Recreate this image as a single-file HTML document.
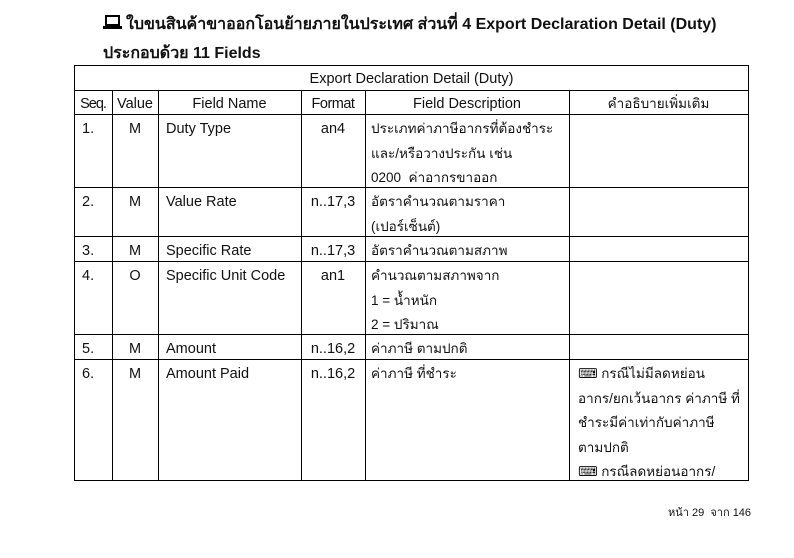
<!DOCTYPE html>
<html><head><meta charset="utf-8"><style>
body{margin:0;width:794px;height:558px;background:#fff;position:relative;overflow:hidden;font-family:"Liberation Sans","DejaVu Sans",sans-serif;color:#111}
.t{position:absolute;white-space:nowrap;font-size:13.5px;line-height:24.5px;margin-top:2px}
.e{font-size:14.5px}
.h{position:absolute;background:#000;height:1px}
.v{position:absolute;background:#000;width:1px}
.c{text-align:center}
</style></head><body>
<div class="t" style="left:103px;top:9px;font-size:16px;font-weight:bold;line-height:28px"><svg width="19" height="16" viewBox="0 0 19 16" style="vertical-align:-1px;margin-right:4px"><rect x="2" y="1" width="15" height="11" fill="#000"/><rect x="4" y="3" width="11" height="7" fill="#fff"/><rect x="0" y="12" width="19" height="3" fill="#000"/></svg>ใบขนสินค้าขาออกโอนย้ายภายในประเทศ ส่วนที่ 4 Export Declaration Detail (Duty)</div>
<div class="t" style="left:103px;top:38px;font-size:16px;font-weight:bold;line-height:28px">ประกอบด้วย 11 Fields</div>

<div class="h" style="left:74px;width:675px;top:65px"></div>
<div class="h" style="left:74px;width:675px;top:90px"></div>
<div class="h" style="left:74px;width:675px;top:114px"></div>
<div class="h" style="left:74px;width:675px;top:187px"></div>
<div class="h" style="left:74px;width:675px;top:236px"></div>
<div class="h" style="left:74px;width:675px;top:261px"></div>
<div class="h" style="left:74px;width:675px;top:334px"></div>
<div class="h" style="left:74px;width:675px;top:359px"></div>
<div class="h" style="left:74px;width:675px;top:480px"></div>
<div class="v" style="left:74px;top:65px;height:416px"></div>
<div class="v" style="left:748px;top:65px;height:416px"></div>
<div class="v" style="left:112px;top:90px;height:391px"></div>
<div class="v" style="left:158px;top:90px;height:391px"></div>
<div class="v" style="left:301px;top:90px;height:391px"></div>
<div class="v" style="left:365px;top:90px;height:391px"></div>
<div class="v" style="left:569px;top:90px;height:391px"></div>

<div class="t c e" style="left:74px;width:675px;top:65px">Export Declaration Detail (Duty)</div>
<div class="t c e" style="left:74px;width:38px;top:90px;letter-spacing:-1px">Seq.</div>
<div class="t c e" style="left:112px;width:46px;top:90px">Value</div>
<div class="t c e" style="left:158px;width:143px;top:90px">Field Name</div>
<div class="t c e" style="left:301px;width:64px;top:90px;letter-spacing:-0.5px">Format</div>
<div class="t c e" style="left:365px;width:204px;top:90px">Field Description</div>
<div class="t c" style="left:569px;width:179px;top:90px">คำอธิบายเพิ่มเติม</div>

<div class="t e" style="left:82px;top:115px">1.</div><div class="t c e" style="left:112px;width:46px;top:115px">M</div><div class="t e" style="left:166px;top:115px">Duty Type</div><div class="t c e" style="left:301px;width:64px;top:115px">an4</div>
<div class="t" style="left:371px;top:115px">ประเภทค่าภาษีอากรที่ต้องชำระ<br>และ/หรือวางประกัน เช่น<br>0200&nbsp; ค่าอากรขาออก</div>

<div class="t e" style="left:82px;top:188px">2.</div><div class="t c e" style="left:112px;width:46px;top:188px">M</div><div class="t e" style="left:166px;top:188px">Value Rate</div><div class="t c e" style="left:301px;width:64px;top:188px">n..17,3</div>
<div class="t" style="left:371px;top:188px">อัตราคำนวณตามราคา<br>(เปอร์เซ็นต์)</div>

<div class="t e" style="left:82px;top:237px">3.</div><div class="t c e" style="left:112px;width:46px;top:237px">M</div><div class="t e" style="left:166px;top:237px">Specific Rate</div><div class="t c e" style="left:301px;width:64px;top:237px">n..17,3</div>
<div class="t" style="left:371px;top:237px">อัตราคำนวณตามสภาพ</div>

<div class="t e" style="left:82px;top:262px">4.</div><div class="t c e" style="left:112px;width:46px;top:262px">O</div><div class="t e" style="left:166px;top:262px">Specific Unit Code</div><div class="t c e" style="left:301px;width:64px;top:262px">an1</div>
<div class="t" style="left:371px;top:262px">คำนวณตามสภาพจาก<br>1 = น้ำหนัก<br>2 = ปริมาณ</div>

<div class="t e" style="left:82px;top:335px">5.</div><div class="t c e" style="left:112px;width:46px;top:335px">M</div><div class="t e" style="left:166px;top:335px">Amount</div><div class="t c e" style="left:301px;width:64px;top:335px">n..16,2</div>
<div class="t" style="left:371px;top:335px">ค่าภาษี ตามปกติ</div>

<div class="t e" style="left:82px;top:360px">6.</div><div class="t c e" style="left:112px;width:46px;top:360px">M</div><div class="t e" style="left:166px;top:360px">Amount Paid</div><div class="t c e" style="left:301px;width:64px;top:360px">n..16,2</div>
<div class="t" style="left:371px;top:360px">ค่าภาษี ที่ชำระ</div>
<div class="t" style="left:578px;top:360px">⌨ กรณีไม่มีลดหย่อน<br>อากร/ยกเว้นอากร ค่าภาษี ที่<br>ชำระมีค่าเท่ากับค่าภาษี<br>ตามปกติ<br>⌨ กรณีลดหย่อนอากร/</div>

<div class="t" style="left:668px;top:502px;font-size:11px;line-height:18px">หน้า 29&nbsp; จาก 146</div>
</body></html>
